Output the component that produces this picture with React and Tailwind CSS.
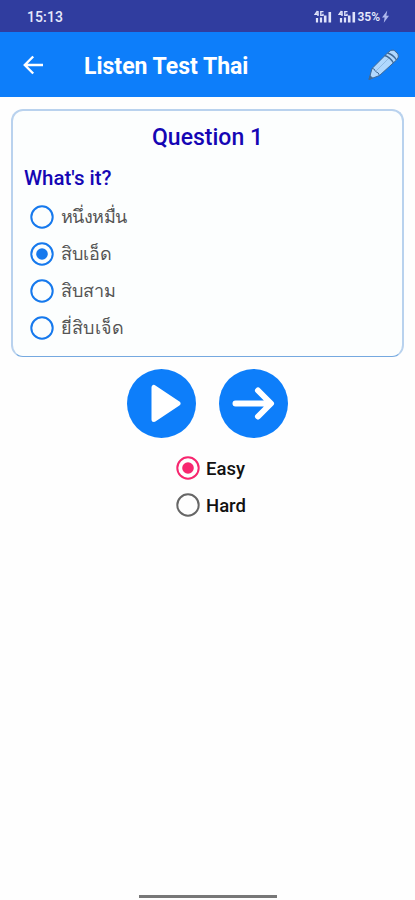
import { useState } from "react"

const answers = [
    { text: "หนึ่งหมื่น", size: "text-[18px] tracking-[-0.6px]" },
    { text: "สิบเอ็ด", size: "text-[18px]" },
    { text: "สิบสาม", size: "text-[18px] tracking-[-0.1px]" },
    { text: "ยี่สิบเจ็ด", size: "text-[18px] tracking-[0.2px]" },
]

function Signal() {
    return (
        <svg viewBox="0 0 18 13" className="w-[18px] h-[13px]" fill="none" stroke="#dfe3fa">
            <path d="M3.5 1 1.2 4.2h3.6M4 1v5M9.5 1.6H6.8v3.8H9V3.8" strokeWidth="1.4" />
            <path d="M3 8v4.5M7 7.5v5" strokeWidth="2.2" />
            <path d="M11.2 5.5v7M15.8 2v10.5" strokeWidth="2.6" />
        </svg>
    )
}

function StatusBar() {
    return (
        <section className="h-8 shrink-0 bg-[#303d9f] text-[#e6e9fc] flex items-center justify-between pl-[27px] pr-[26px]">
            <span className="mt-[1px] text-[14px] leading-none font-medium tracking-[0.1px]">15:13</span>
            <section className="flex items-center">
                <Signal />
                <section className="w-[6px]" />
                <Signal />
                <span className="ml-[1px] mt-[1px] text-[12px] leading-none font-semibold">35%</span>
                <svg viewBox="0 0 8 14" className="ml-[2px] w-[7px] h-[13px]" fill="#aeb8ed">
                    <path d="M6 0 0 8h3L2 14l6-8H5z" />
                </svg>
            </section>
        </section>
    )
}

function Pencil() {
    return (
        <svg viewBox="0 0 32 32" className="w-8 h-8" fill="#b0d8fe" stroke="#3f6996" strokeWidth="1" strokeLinejoin="round">
            <path d="M1 30.5 4 19.5 19.5 4Q23 0 26 1.2L30 5Q31.5 8 28.5 11L11.5 26.5Z" />
            <path d="M4 19.5Q6.5 19 7.5 22.5 11 23.5 11.5 26.5" fill="none" />
            <path d="M7.5 22.5 22 8" fill="none" stroke="#83add6" strokeWidth=".7" />
            <path d="M16.7 6.5Q22 8 25.5 14M19.5 4Q25 5.5 28.5 11" fill="none" strokeWidth="1.3" />
            <path d="M1 30.5 2 26.8 4.6 29Z" fill="#3f6996" />
        </svg>
    )
}

function Header() {
    return (
        <header className="h-[65px] shrink-0 bg-[#0d7efa] flex items-center pl-[23px] pr-[15px] text-white">
            <svg viewBox="0 0 20 20" className="w-5 h-5" fill="none" stroke="currentColor" strokeWidth="2.4">
                <path d="M10.2 1.5 1.8 10l8.4 8.5M2 10h18" />
            </svg>
            <h1 className="ml-[41px] mt-[4px] text-[23px] leading-none font-bold whitespace-nowrap">Listen Test Thai</h1>
            <section className="ml-auto">
                <Pencil />
            </section>
        </header>
    )
}

function Radio({ checked, color }) {
    return (
        <svg viewBox="0 0 24 24" className={`w-6 h-6 shrink-0 ${color}`} fill="none" stroke="currentColor" strokeWidth="2">
            <circle cx="12" cy="12" r="10.7" />
            {checked ? <circle cx="12" cy="12" r="5.8" fill="currentColor" stroke="none" /> : ""}
        </svg>
    )
}

function App() {
    const [answer, setAnswer] = useState(1)
    const [level, setLevel] = useState("Easy")

    return (
        <main className="w-full h-screen bg-[#fefefe] font-['Roboto','Noto_Sans',sans-serif] flex flex-col">
            <StatusBar />
            <Header />
            <section className="mt-3 ml-[11px] mr-[11px] h-[248px] shrink-0 rounded-[12px] border-2 border-b border-[#b9d2ee] border-b-[#75a9e0] bg-[#fcfefe]">
                <h2 className="mt-[14px] text-center text-[23px] leading-[26px] font-medium text-[#1506b4]">Question 1</h2>
                <h3 className="mt-[15px] pl-[11px] text-[20.5px] leading-6 font-medium text-[#1506b4]">What's it?</h3>
                <section className="mt-[8px] pl-[17px] flex flex-col items-start">
                    {answers.map((item, index) => (
                        <button key={index} onClick={() => setAnswer(index)} className="h-[37px] flex items-center gap-[7px]">
                            <Radio checked={answer === index} color="text-[#1679ed]" />
                            <span className={`${item.size} leading-none text-[#555] whitespace-nowrap`}>{item.text}</span>
                        </button>
                    ))}
                </section>
            </section>
            <section className="mt-3 flex justify-center gap-[23px]">
                <button aria-label="Play">
                    <svg viewBox="0 0 69 69" className="w-[69px] h-[69px]">
                        <circle cx="34.5" cy="34.5" r="34.5" fill="#0d7efa" />
                        <path d="M27 18.5v32L51 34.5Z" fill="#fff" stroke="#fff" strokeWidth="5" strokeLinejoin="round" />
                    </svg>
                </button>
                <button aria-label="Next">
                    <svg viewBox="0 0 69 69" className="w-[69px] h-[69px]">
                        <circle cx="34.5" cy="34.5" r="34.5" fill="#0d7efa" />
                        <path d="M16.5 34.5H51.5M39 21.5l13 13-13 13" fill="none" stroke="#fff" strokeWidth="6" strokeLinecap="round" strokeLinejoin="round" />
                    </svg>
                </button>
            </section>
            <section className="mt-[11px] pl-[176px] flex flex-col items-start">
                {["Easy", "Hard"].map((item) => (
                    <button key={item} onClick={() => setLevel(item)} className="h-[37px] flex items-center gap-[6px]">
                        <Radio checked={level === item} color={level === item ? "text-[#f7266f]" : "text-[#666]"} />
                        <span className="mt-[3px] text-[18.5px] leading-none font-medium text-[#111]">{item}</span>
                    </button>
                ))}
            </section>
            <section className="mt-auto mb-[2px] mx-auto w-[138px] h-[3px] bg-[#777]" />
        </main>
    )
}

export default App
